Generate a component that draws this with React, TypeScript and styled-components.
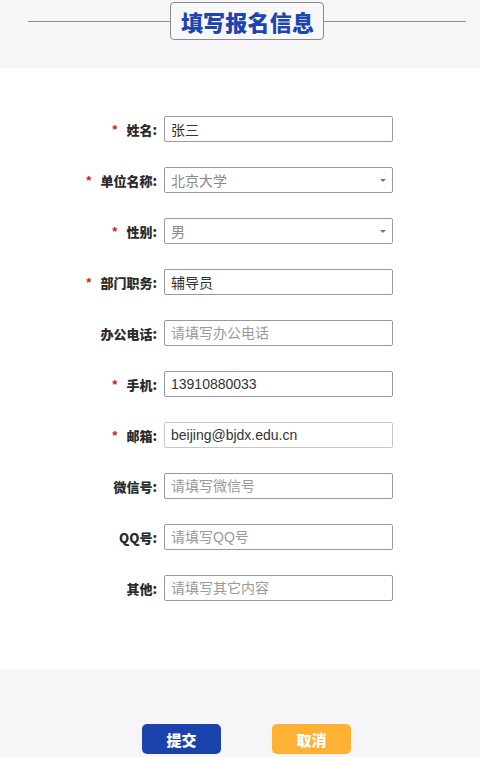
import React from 'react'
import styled, { createGlobalStyle } from 'styled-components'

const GlobalStyle = createGlobalStyle`
  html, body {
    margin: 0;
    padding: 0;
    background: #f6f6f9;
    font-family: "Liberation Sans", "Noto Sans CJK SC", sans-serif;
  }
  * {
    box-sizing: border-box;
  }
`

const Page = styled.div`
  width: 480px;
  min-height: 757px;
  display: flex;
  flex-direction: column;
  background: #f6f6f9;
`

const Header = styled.div`
  height: 68px;
  padding: 2px 14px 0 28px;
`

const TitleRow = styled.div`
  display: flex;
  align-items: center;
  height: 38px;
`

const Line = styled.div`
  flex: 1;
  height: 1px;
  background: #8c8c8c;
`

const TitleBox = styled.div`
  height: 38px;
  padding: 0 9px 0 10px;
  display: flex;
  align-items: center;
  border: 1px solid #8a8a8a;
  border-radius: 4px;
  background: #f8f8fa;
  color: #1c45b0;
  font-family: "Noto Sans CJK SC", sans-serif;
  font-size: 22px;
  font-weight: 900;
  letter-spacing: 0.2px;
`

const FormSection = styled.div`
  background: #ffffff;
  padding: 48px 0 69px;
  display: flex;
  flex-direction: column;
  gap: 25px;
`

const Row = styled.div`
  display: flex;
  align-items: center;
  height: 26px;
`

const Label = styled.div`
  width: 157px;
  display: flex;
  justify-content: flex-end;
  align-items: center;
  gap: 9px;
  font-family: "Noto Sans CJK SC", sans-serif;
  font-size: 13px;
  font-weight: 900;
  color: #2b2b2b;
`

const Star = styled.span`
  color: #d0201c;
  font-size: 13px;
  font-weight: 700;
  font-family: "Liberation Sans", sans-serif;
`

const Field = styled.div<{ $light?: boolean }>`
  position: relative;
  margin-left: 7px;
  width: 229px;
  height: 26px;
  border: 1px solid ${({ $light }) => ($light ? '#c8c8c8' : '#999')};
  border-radius: 2px;
  background: #fff;
  display: flex;
  align-items: center;
  padding: 0 6px;
`

const Input = styled.input`
  width: 100%;
  border: none;
  outline: none;
  padding: 0;
  background: transparent;
  font-family: "Liberation Sans", "Noto Sans CJK SC", sans-serif;
  font-size: 14px;
  color: #333;

  &::placeholder {
    color: #9a9a9a;
  }
`

const SelectValue = styled.span`
  font-family: "Liberation Sans", "Noto Sans CJK SC", sans-serif;
  font-size: 14px;
  color: #8a8a8a;
`

const Caret = styled.span`
  position: absolute;
  right: 6px;
  top: 11px;
  width: 0;
  height: 0;
  border-left: 3px solid transparent;
  border-right: 3px solid transparent;
  border-top: 3px solid #777;
`

const Footer = styled.div`
  flex: 1;
  padding: 54px 0 0 13px;
  display: flex;
  justify-content: center;
  gap: 51px;
`

const Button = styled.button<{ $color: string }>`
  width: 79px;
  height: 30px;
  border: none;
  border-radius: 5px;
  background: ${({ $color }) => $color};
  color: #fff;
  font-family: "Noto Sans CJK SC", sans-serif;
  font-size: 15px;
  font-weight: 900;
  cursor: pointer;
`

type FieldDef = {
  label: string
  required?: boolean
  value?: string
  placeholder?: string
  select?: boolean
  light?: boolean
}

const fields: FieldDef[] = [
  { label: '姓名:', required: true, value: '张三' },
  { label: '单位名称:', required: true, value: '北京大学', select: true },
  { label: '性别:', required: true, value: '男', select: true },
  { label: '部门职务:', required: true, value: '辅导员' },
  { label: '办公电话:', placeholder: '请填写办公电话' },
  { label: '手机:', required: true, value: '13910880033' },
  { label: '邮箱:', required: true, value: 'beijing@bjdx.edu.cn', light: true },
  { label: '微信号:', placeholder: '请填写微信号' },
  { label: 'QQ号:', placeholder: '请填写QQ号' },
  { label: '其他:', placeholder: '请填写其它内容' },
]

function FormRow({ field }: { field: FieldDef }) {
  return (
    <Row>
      <Label>
        {field.required ? <Star>*</Star> : null}
        <span>{field.label}</span>
      </Label>
      <Field $light={field.light}>
        {field.select ? (
          <>
            <SelectValue>{field.value}</SelectValue>
            <Caret />
          </>
        ) : (
          <Input defaultValue={field.value} placeholder={field.placeholder} />
        )}
      </Field>
    </Row>
  )
}

export default function App() {
  return (
    <Page>
      <GlobalStyle />
      <Header>
        <TitleRow>
          <Line />
          <TitleBox>填写报名信息</TitleBox>
          <Line />
        </TitleRow>
      </Header>
      <FormSection>
        {fields.map((f) => (
          <FormRow key={f.label} field={f} />
        ))}
      </FormSection>
      <Footer>
        <Button $color="#1b43ae">提交</Button>
        <Button $color="#ffb133">取消</Button>
      </Footer>
    </Page>
  )
}
